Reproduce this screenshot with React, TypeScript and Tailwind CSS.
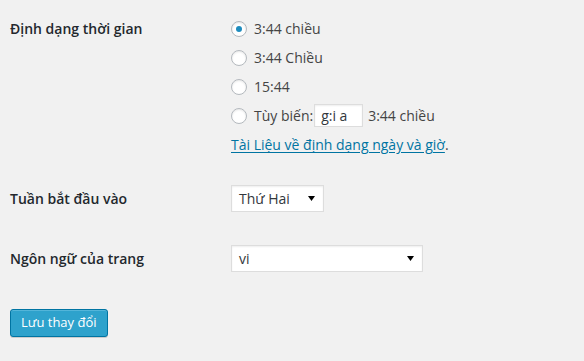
import React from "react";

function Radio({ checked }: { checked?: boolean }) {
  return (
    <span className="flex h-[16px] w-[16px] shrink-0 items-center justify-center rounded-full border border-[#b4b9be] bg-white shadow-[inset_0_1px_2px_rgba(0,0,0,0.1)]">
      {checked && <span className="block h-[6px] w-[6px] rounded-full bg-[#1e8cbe]" />}
    </span>
  );
}

function Arrow() {
  return (
    <svg width="7" height="5" viewBox="0 0 7 5" className="shrink-0">
      <polygon points="0,0 7,0 3.5,5" fill="#000" />
    </svg>
  );
}

function Select({ value, width }: { value: string; width: string }) {
  return (
    <div
      className={`flex h-[27px] items-center justify-between border border-[#dddddd] bg-white pl-[7px] pr-[8px] text-[14px] text-[#32373c] shadow-[inset_0_1px_2px_rgba(0,0,0,0.07)] ${width}`}
    >
      <span>{value}</span>
      <Arrow />
    </div>
  );
}

export default function App() {
  const options = ["3:44 chiều", "3:44 Chiều", "15:44"];
  return (
    <div
      className="h-[361px] w-[584px] overflow-hidden bg-[#f1f1f1] pl-[10px] text-[14px] text-[#444444]"
      style={{ fontFamily: '"Open Sans", "Noto Sans", sans-serif' }}
    >
      {/* Row 1 */}
      <div className="flex pt-[14px]">
        <div className="flex h-[29px] w-[221px] items-center font-semibold text-[#23282d]">
          Định dạng thời gian
        </div>
        <div className="flex flex-col">
          {options.map((o, i) => (
            <div key={o} className="flex h-[29px] items-center">
              <Radio checked={i === 0} />
              <span className="ml-[7px]">{o}</span>
            </div>
          ))}
          <div className="flex h-[29px] items-center">
            <Radio />
            <span className="ml-[7px]">Tùy biến:</span>
            <span className="ml-[1px] flex h-[23px] w-[49px] items-center border border-[#dddddd] bg-white pl-[6px] text-[#32373c] shadow-[inset_0_1px_2px_rgba(0,0,0,0.07)]">
              g:i a
            </span>
            <span className="ml-[5px]">3:44 chiều</span>
          </div>
          <div className="flex h-[29px] items-center">
            <span className="text-[#0074a2] underline underline-offset-2">Tài Liệu về định dạng ngày và giờ</span>
            <span>.</span>
          </div>
        </div>
      </div>

      {/* Row 2 */}
      <div className="mt-[26px] flex items-center">
        <div className="w-[221px] font-semibold text-[#23282d]">Tuần bắt đầu vào</div>
        <Select value="Thứ Hai" width="w-[93px]" />
      </div>

      {/* Row 3 */}
      <div className="mt-[33px] flex items-center">
        <div className="w-[221px] font-semibold text-[#23282d]">Ngôn ngữ của trang</div>
        <Select value="vi" width="w-[192px]" />
      </div>

      {/* Button */}
      <div className="mt-[37px]">
        <button className="h-[28px] rounded-[3px] border border-[#0074a2] bg-[#2ea2cc] px-[10px] pb-[1px] text-[13px] text-white shadow-[inset_0_1px_0_rgba(120,200,230,0.5),0_1px_0_rgba(0,0,0,0.15)]">
          Lưu thay đổi
        </button>
      </div>
    </div>
  );
}
